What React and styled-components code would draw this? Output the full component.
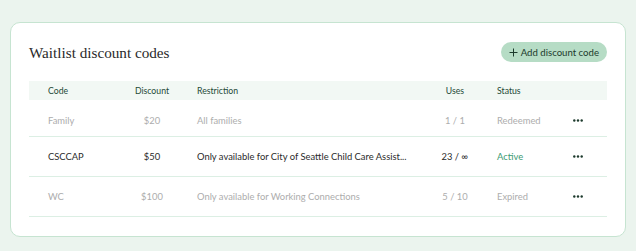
import React from "react"
import styled, { createGlobalStyle } from "styled-components"

const codes = [
  { code: "Family", discount: "$20", restriction: "All families", uses: "1 / 1", status: "Redeemed", active: false },
  { code: "CSCCAP", discount: "$50", restriction: "Only available for City of Seattle Child Care Assist...", uses: "23 / ∞", status: "Active", active: true },
  { code: "WC", discount: "$100", restriction: "Only available for Working Connections", uses: "5 / 10", status: "Expired", active: false },
]

const GlobalStyle = createGlobalStyle`
  html, body {
    margin: 0;
    background: #ebf4ee;
  }
  body {
    font-family: Lato, "Noto Sans", sans-serif;
  }
`

const Page = styled.div`
  padding: 22px 10px 15px 10px;
`

const Card = styled.div`
  background: #fff;
  border: 1px solid #c6e4d1;
  border-radius: 10px;
  padding: 19px 18px 19px 18px;
`

const Header = styled.div`
  display: flex;
  align-items: center;
  justify-content: space-between;
  margin-bottom: 19px;
`

const Title = styled.h2`
  margin: 0;
  padding-top: 2px;
  font-family: "Liberation Serif", serif;
  font-weight: 400;
  font-size: 15.2px;
  color: #2a2a2a;
`

const AddButton = styled.button`
  display: flex;
  align-items: center;
  gap: 3px;
  height: 20px;
  padding: 0 8px 0 8px;
  border: none;
  border-radius: 10px;
  background: #b6dcc5;
  color: #1c3a2c;
  font-family: Lato, sans-serif;
  font-size: 9.6px;
`

const Table = styled.div`
  display: grid;
  grid-template-columns: 80px 86px 1fr 64px 62px 58px;
`

const HeadRow = styled.div`
  display: contents;
  & > div {
    background: #f2f8f4;
    height: 19px;
    color: #1e4a37;
    font-size: 8.7px;
  }
`

const Row = styled.div`
  display: contents;
  & > div {
    height: ${p => (p.$first ? "31px" : "39px")};
    padding-top: ${p => (p.$first ? "5px" : "0")};
    border-bottom: 1px solid #dcefe4;
    color: ${p => (p.$active ? "#2b2b2b" : "#adadad")};
    font-size: 9.4px;
  }
`

const Cell = styled.div`
  display: flex;
  align-items: center;
  min-width: 0;
  justify-content: ${p => (p.$center ? "center" : "flex-start")};
  padding-left: ${p => p.$pad || 0}px;
  white-space: nowrap;
`

const Status = styled.span`
  color: ${p => (p.$active ? "#3c9a73" : "inherit")};
`

const Dots = () => (
  <svg width="10" height="3" viewBox="0 0 10 3">
    <circle cx="1.3" cy="1.5" r="1.2" fill="#1c3a2c" />
    <circle cx="5" cy="1.5" r="1.2" fill="#1c3a2c" />
    <circle cx="8.7" cy="1.5" r="1.2" fill="#1c3a2c" />
  </svg>
)

const App = () => (
  <>
    <GlobalStyle />
    <Page>
      <Card>
        <Header>
          <Title>Waitlist discount codes</Title>
          <AddButton>
            <svg width="9" height="9" viewBox="0 0 9 9">
              <path d="M4.5 0.5v8M0.5 4.5h8" stroke="#1c3a2c" strokeWidth="1" />
            </svg>
            Add discount code
          </AddButton>
        </Header>
        <Table>
          <HeadRow>
            <Cell $pad={19}>Code</Cell>
            <Cell $center>Discount</Cell>
            <Cell $pad={2}>Restriction</Cell>
            <Cell $center>Uses</Cell>
            <Cell $pad={10}>Status</Cell>
            <Cell />
          </HeadRow>
          {codes.map((c, i) => (
            <Row key={c.code} $active={c.active} $first={i === 0}>
              <Cell $pad={19}>{c.code}</Cell>
              <Cell $center>{c.discount}</Cell>
              <Cell $pad={2}>{c.restriction}</Cell>
              <Cell $center>{c.uses}</Cell>
              <Cell $pad={10}><Status $active={c.active}>{c.status}</Status></Cell>
              <Cell $center><Dots /></Cell>
            </Row>
          ))}
        </Table>
      </Card>
    </Page>
  </>
)

export default App
